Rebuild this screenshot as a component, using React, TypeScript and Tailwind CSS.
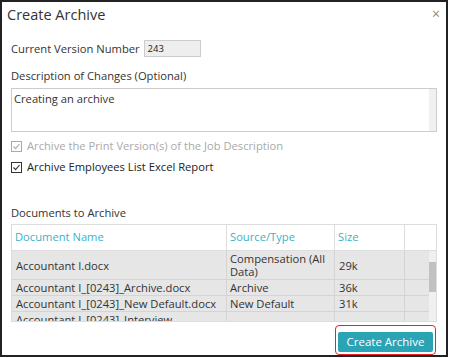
import React from 'react';

const rows = [
  { name: 'Accountant I.docx', type: 'Compensation (All Data)', size: '29k' },
  { name: 'Accountant I_[0243]_Archive.docx', type: 'Archive', size: '36k' },
  { name: 'Accountant I_[0243]_New Default.docx', type: 'New Default', size: '31k' },
  { name: 'Accountant I_[0243]_Interview Guide.docx', type: 'Interview Guide', size: '55k' },
];

function Check({ disabled }: { disabled?: boolean }) {
  return (
    <span
      className={`flex h-[11px] w-[11px] shrink-0 items-center justify-center border ${disabled ? 'border-[#aaa]' : 'border-[#333]'} bg-white`}
    >
      <svg width="9" height="9" viewBox="0 0 9 9" fill="none">
        <path d="M1.5 4.5 L3.6 6.6 L7.5 2" stroke={disabled ? '#aaa' : '#333'} strokeWidth="1.1" />
      </svg>
    </span>
  );
}

export default function App() {
  return (
    <div className="h-[358px] w-[450px] bg-white font-['Open_Sans',sans-serif] text-[#333]">
      <div className="flex h-[357px] w-[448px] flex-col overflow-hidden border-2 border-[#222] bg-white">
        <div className="flex h-[26px] items-start justify-between pl-[5px] pr-[6px] pt-[1px]">
          <h1 className="text-[14.5px] leading-[24px] text-[#333]">Create Archive</h1>
          <span className="mt-[4px] text-[14px] leading-[14px] text-[#888]">×</span>
        </div>

        <div className="px-[9px]">
          <div className="mt-[12px] flex items-center">
            <span className="text-[11.2px] leading-[16px]">Current Version Number</span>
            <div className="ml-[4px] h-[17px] w-[57px] border border-[#ccc] bg-[#eee] pl-[3px] text-[9.5px] leading-[15px] text-[#222]">
              243
            </div>
          </div>

          <div className="mt-[11px] text-[11.2px] leading-[16px]">Description of Changes (Optional)</div>

          <div className="mt-[4px] flex h-[44px] border border-[#ccc] bg-white">
            <div className="flex-1 pl-[2px] pt-[2px] text-[11.2px] leading-[16px] text-[#333]">Creating an archive</div>
            <div className="w-[7px] bg-[#f0f0f0]" />
          </div>

          <label className="mt-[6px] flex items-center gap-[5px] text-[11.2px] leading-[16px] text-[#aaa]">
            <Check disabled />
            Archive the Print Version(s) of the Job Description
          </label>
          <label className="mt-[5px] flex items-center gap-[5px] text-[11.2px] leading-[16px] text-[#222]">
            <Check />
            Archive Employees List Excel Report
          </label>

          <div className="mt-[30px] text-[11.2px] leading-[16px]">Documents to Archive</div>

          <div className="mt-[3px] h-[98px] overflow-hidden border border-[#ddd] bg-[#e6e6e6]">
            <div className="flex h-[26px] border-b border-[#ddd] bg-white text-[11.2px] text-[#3ab3c7]">
              <div className="flex w-[215px] items-center border-r border-[#ddd] pl-[3px]">Document Name</div>
              <div className="flex w-[108px] items-center border-r border-[#ddd] pl-[3px]">Source/Type</div>
              <div className="flex w-[70px] items-center border-r border-[#ddd] pl-[3px]">Size</div>
              <div className="flex-1" />
            </div>
            <div className="flex">
              <div className="flex-1">
                {rows.map((r) => (
                  <div key={r.name} className="flex border-b border-[#d4d4d4] text-[11.2px] leading-[13px] text-[#333]">
                    <div className="flex w-[215px] shrink-0 items-center border-r border-[#d4d4d4] px-[4px] py-[1px]">{r.name}</div>
                    <div className="flex w-[108px] shrink-0 items-center border-r border-[#d4d4d4] px-[3px] py-[1px]">{r.type}</div>
                    <div className="flex w-[70px] shrink-0 items-center border-r border-[#d4d4d4] px-[4px] py-[1px]">{r.size}</div>
                    <div className="flex-1" />
                  </div>
                ))}
              </div>
              <div className="w-[7px] bg-[#f0f0f0] pt-[11px]">
                <div className="h-[30px] bg-[#c1c1c1]" />
              </div>
            </div>
          </div>

          <div className="mt-[3px] flex justify-end pr-[1px]">
            <div className="rounded-[4px] border-[1.5px] border-[#e0262b] p-[2px]">
              <button className="h-[20px] w-[95px] whitespace-nowrap rounded-[2px] bg-[#2aa3b5] text-[11.5px] leading-[20px] text-white">
                Create Archive
              </button>
            </div>
          </div>
        </div>
      </div>
    </div>
  );
}
